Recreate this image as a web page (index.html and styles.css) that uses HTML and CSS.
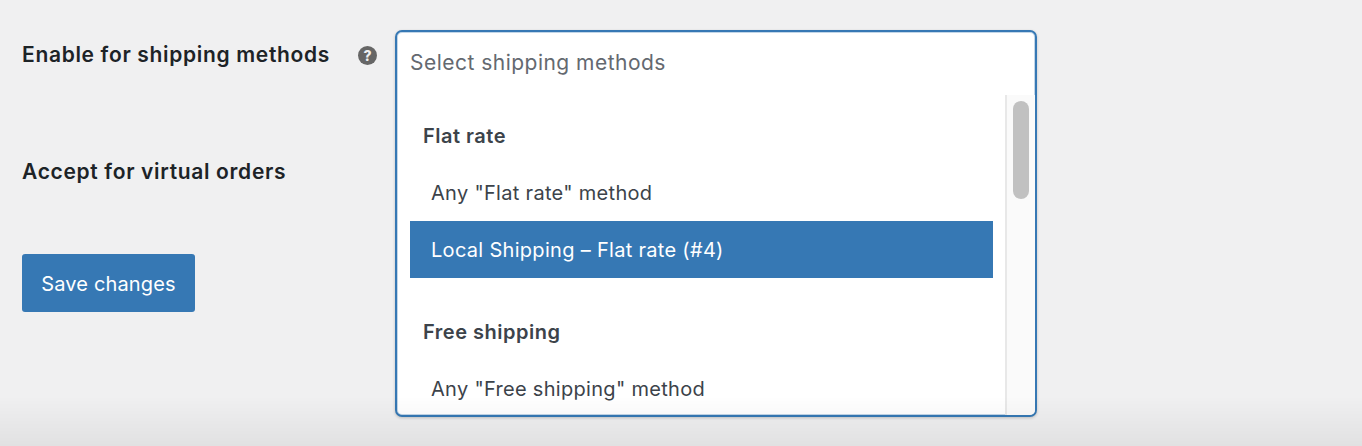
FILE: index.html
```html
<!DOCTYPE html>
<html>
<head>
    <meta name="viewport" content="width=device-width, initial-scale=1.0">
    <title>Enable for shipping methods</title>
    <link rel="stylesheet" href="styles.css">
</head>
<body>
<div id="main">
    <div class="labels">
        <div class="label-row first">
            <label class="label">Enable for shipping methods</label>
            <span class="help">?</span>
        </div>
        <div class="label-row second">
            <label class="label">Accept for virtual orders</label>
        </div>
        <button class="save">Save changes</button>
    </div>
    <div class="select">
        <div class="placeholder">Select shipping methods</div>
        <div class="dropdown">
            <div class="list">
                <div class="group">Flat rate</div>
                <div class="option">Any "Flat rate" method</div>
                <div class="option selected">Local Shipping – Flat rate (#4)</div>
                <div class="group next">Free shipping</div>
                <div class="option">Any "Free shipping" method</div>
            </div>
            <div class="scrollbar">
                <div class="thumb"></div>
            </div>
        </div>
    </div>
</div>
<div class="fade"></div>
</body>
</html>
```

FILE: styles.css
```css
html, body {
    height: 100%;
    margin: 0;
    overflow: hidden;
}

body {
    background-color: #f0f0f1;
    font-family: Inter, "Noto Sans", sans-serif;
    color: #1d2327;
}

#main {
    display: flex;
    padding: 30px 0 0 22px;
}

.labels {
    width: 373px;
    flex: none;
}

.label-row {
    display: flex;
    align-items: center;
    height: 28px;
}

.first {
    margin-top: 10px;
}

.second {
    margin-top: 89px;
}

.label {
    width: 336px;
    flex: none;
    font-size: 21px;
    font-weight: 600;
    letter-spacing: .67px;
}

.help {
    width: 19px;
    height: 19px;
    margin-top: 3px;
    border-radius: 50%;
    background-color: #666;
    color: #f0f0f1;
    font-size: 14px;
    font-weight: 800;
    line-height: 19px;
    text-align: center;
}

.save {
    display: block;
    width: 173px;
    height: 58px;
    margin-top: 69px;
    padding: 1px 0 0;
    border: 0;
    border-radius: 3px;
    background-color: #3678b4;
    color: #fff;
    font-family: inherit;
    font-size: 20px;
    letter-spacing: .17px;
    cursor: pointer;
}

.select {
    box-sizing: border-box;
    display: flex;
    flex-direction: column;
    width: 642px;
    height: 387px;
    flex: none;
    overflow: hidden;
    border: 2px solid #3678b4;
    border-radius: 7px;
    background-color: #fff;
    box-shadow: 0 1px 3px rgba(0, 0, 0, .2), inset 0 0 0 1px rgba(54, 120, 180, .3);
}

.placeholder {
    box-sizing: border-box;
    height: 63px;
    flex: none;
    padding: 16px 0 0 13px;
    color: #646970;
    font-size: 21px;
    letter-spacing: .48px;
    line-height: 30px;
}

.dropdown {
    display: flex;
    flex: 1;
    min-height: 0;
}

.list {
    width: 583px;
    margin-left: 13px;
    padding-top: 12px;
    flex: none;
    color: #3c434a;
}

.group {
    height: 57px;
    padding-left: 13px;
    font-size: 20px;
    font-weight: 600;
    letter-spacing: .5px;
    line-height: 59px;
}

.next {
    margin-top: 25px;
}

.option {
    height: 57px;
    padding-left: 21px;
    font-size: 20px;
    letter-spacing: .3px;
    line-height: 59px;
}

.selected {
    background-color: #3678b4;
    color: #fff;
}

.scrollbar {
    box-sizing: border-box;
    width: 30px;
    margin-left: 12px;
    padding: 6px 0 0 6px;
    flex: none;
    border-left: 2px solid #e8e8e8;
    background-color: #fafafa;
}

.thumb {
    width: 16px;
    height: 98px;
    border-radius: 8px;
    background-color: #c1c1c1;
}

.fade {
    position: fixed;
    left: 0;
    right: 0;
    bottom: 0;
    height: 50px;
    background: linear-gradient(rgba(0, 0, 0, 0), rgba(0, 0, 0, .06));
    pointer-events: none;
}
```
